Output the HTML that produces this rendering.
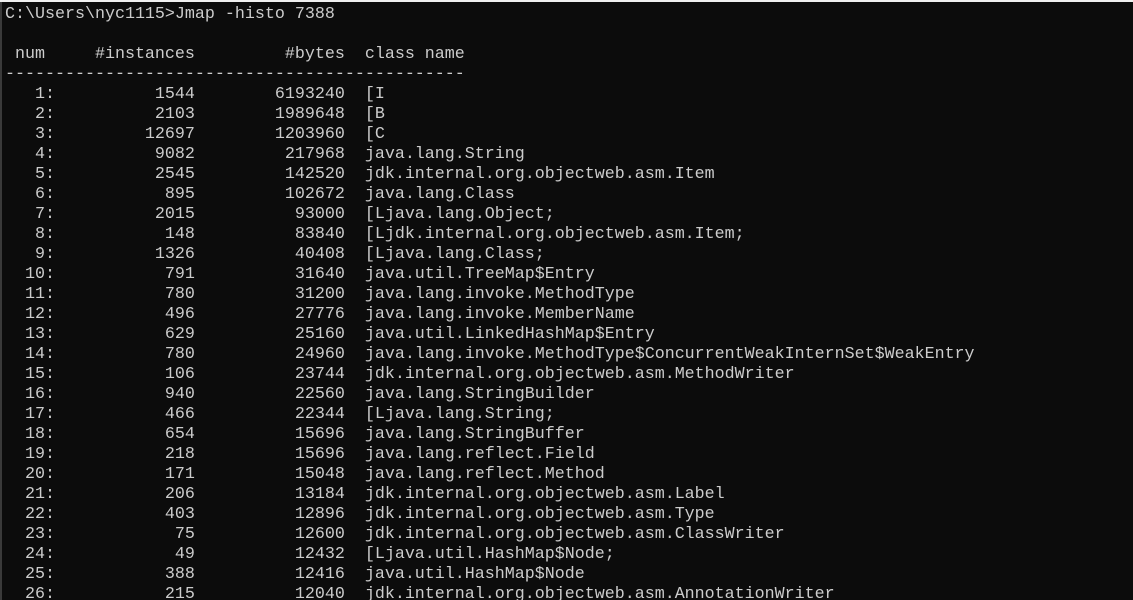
<!DOCTYPE html>
<html><head><meta charset="utf-8"><style>
html,body{margin:0;padding:0;width:1133px;height:600px;overflow:hidden;background:#0c0c0c;}
body{border-top:2px solid #f0f0f0;box-sizing:border-box;position:relative;}
pre{position:absolute;left:5px;top:3px;margin:0;font-family:"Liberation Mono","Noto Sans CJK SC",monospace;font-size:16.67px;line-height:20px;color:#cccccc;letter-spacing:0;}
.edge{position:absolute;left:0;top:0;width:2px;height:600px;background:#3a3a3a;}
</style></head><body><div class="edge"></div><pre>C:\Users\nyc1115&gt;Jmap -histo 7388

 num     #instances         #bytes  class name
----------------------------------------------
   1:          1544        6193240  [I
   2:          2103        1989648  [B
   3:         12697        1203960  [C
   4:          9082         217968  java.lang.String
   5:          2545         142520  jdk.internal.org.objectweb.asm.Item
   6:           895         102672  java.lang.Class
   7:          2015          93000  [Ljava.lang.Object;
   8:           148          83840  [Ljdk.internal.org.objectweb.asm.Item;
   9:          1326          40408  [Ljava.lang.Class;
  10:           791          31640  java.util.TreeMap$Entry
  11:           780          31200  java.lang.invoke.MethodType
  12:           496          27776  java.lang.invoke.MemberName
  13:           629          25160  java.util.LinkedHashMap$Entry
  14:           780          24960  java.lang.invoke.MethodType$ConcurrentWeakInternSet$WeakEntry
  15:           106          23744  jdk.internal.org.objectweb.asm.MethodWriter
  16:           940          22560  java.lang.StringBuilder
  17:           466          22344  [Ljava.lang.String;
  18:           654          15696  java.lang.StringBuffer
  19:           218          15696  java.lang.reflect.Field
  20:           171          15048  java.lang.reflect.Method
  21:           206          13184  jdk.internal.org.objectweb.asm.Label
  22:           403          12896  jdk.internal.org.objectweb.asm.Type
  23:            75          12600  jdk.internal.org.objectweb.asm.ClassWriter
  24:            49          12432  [Ljava.util.HashMap$Node;
  25:           388          12416  java.util.HashMap$Node
  26:           215          12040  jdk.internal.org.objectweb.asm.AnnotationWriter
</pre></body></html>
